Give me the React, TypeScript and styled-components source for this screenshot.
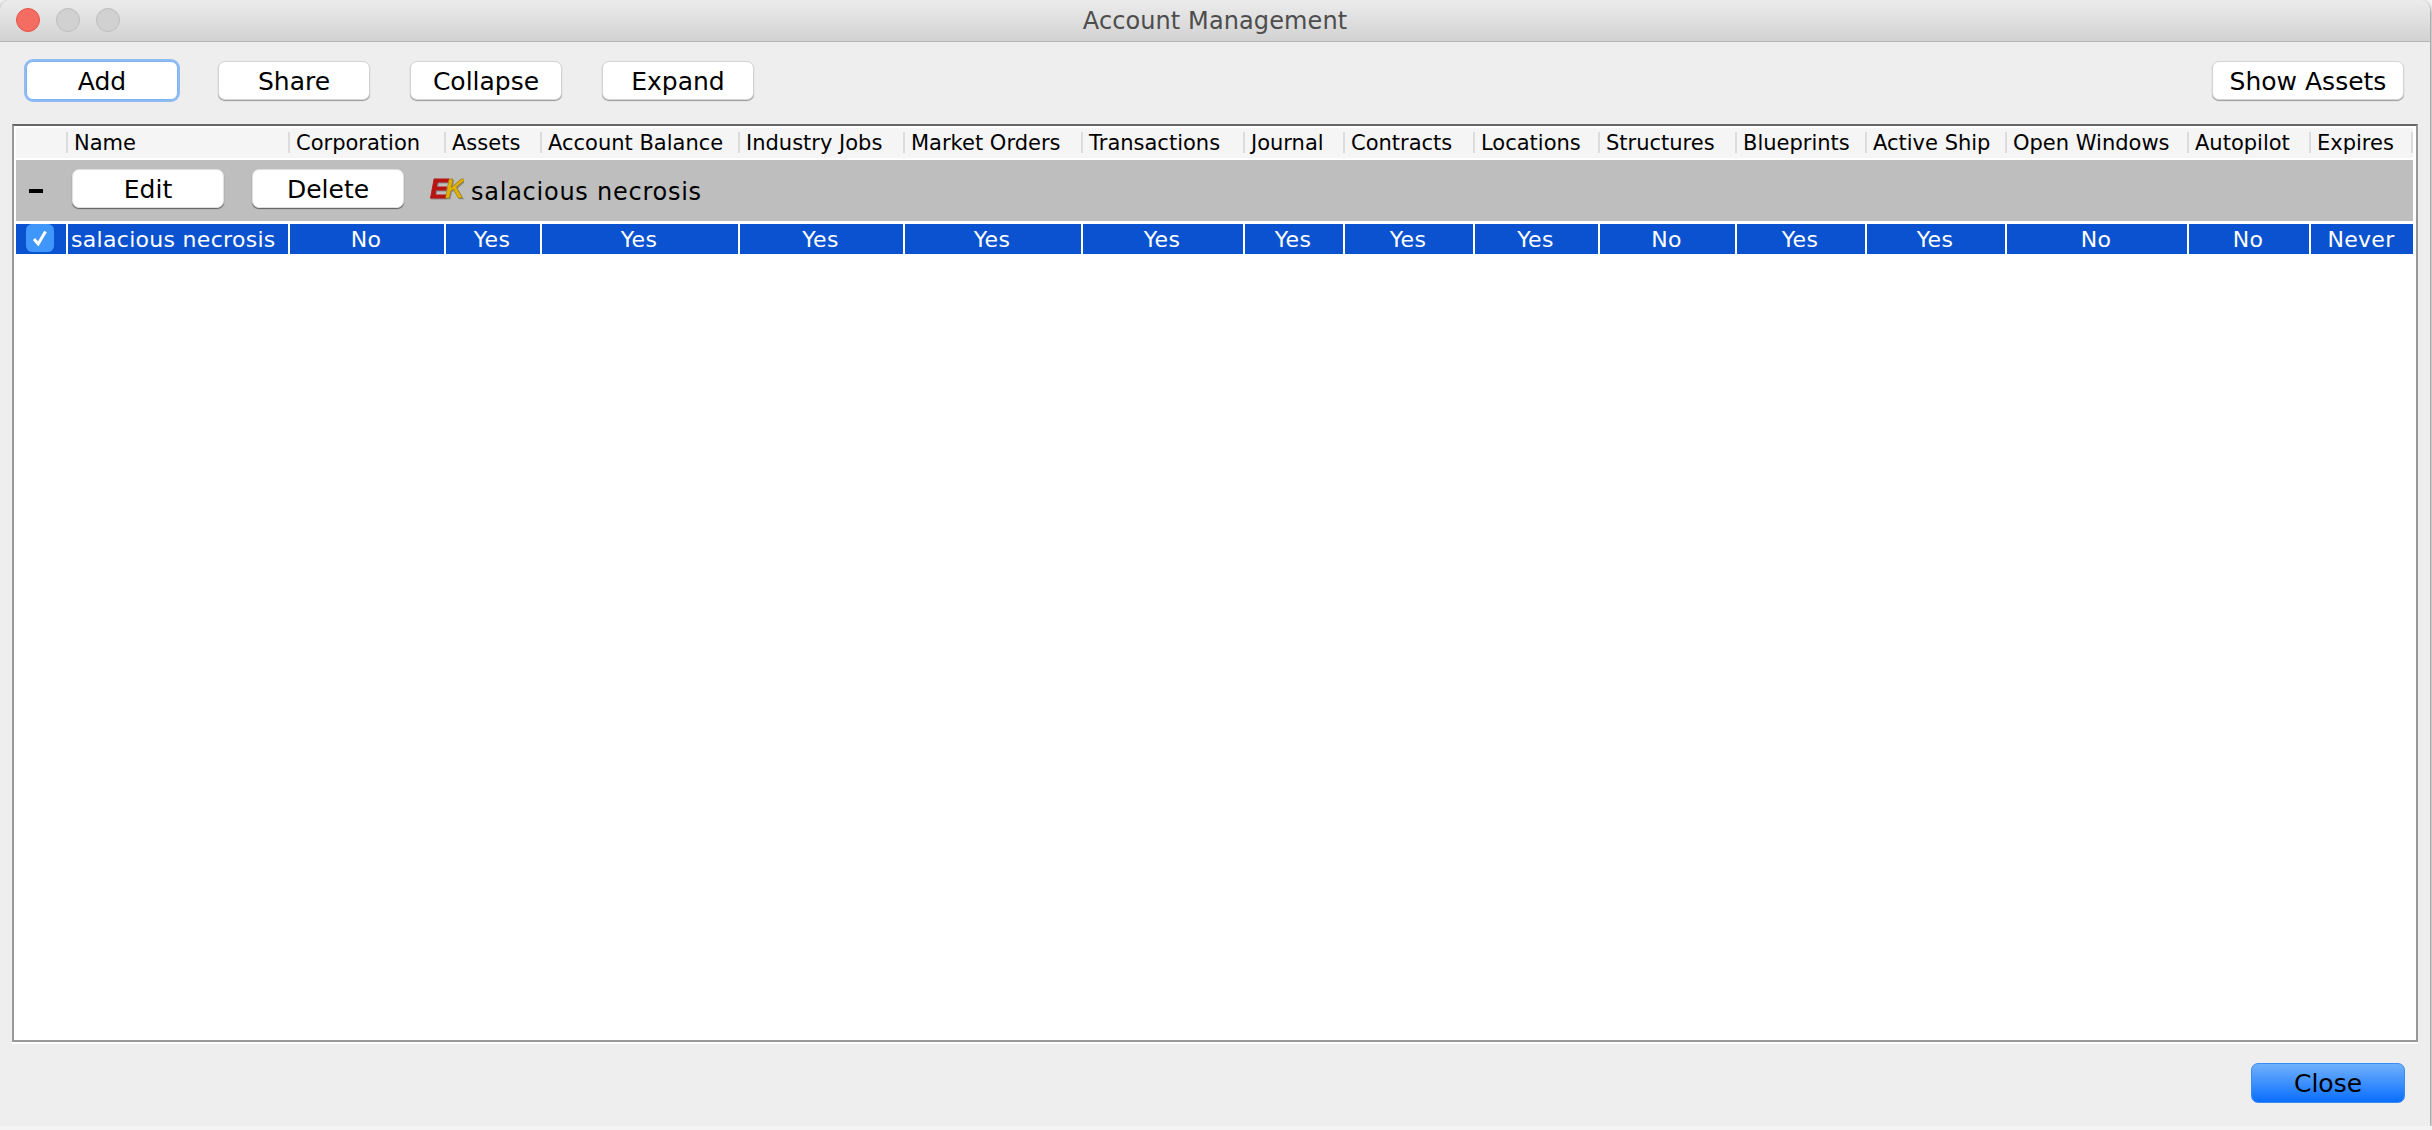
import React from 'react'
import styled, { createGlobalStyle } from 'styled-components'

const GlobalStyle = createGlobalStyle`
  html, body {
    margin: 0;
    padding: 0;
    background: #f4f4f4;
    overflow: hidden;
  }
`

const UI_FONT = `"DejaVu Sans", "Noto Sans", sans-serif`

const COLUMNS = [
  { title: '', width: 50 },
  { title: 'Name', width: 222, value: 'salacious necrosis' },
  { title: 'Corporation', width: 156, value: 'No' },
  { title: 'Assets', width: 96, value: 'Yes' },
  { title: 'Account Balance', width: 198, value: 'Yes' },
  { title: 'Industry Jobs', width: 165, value: 'Yes' },
  { title: 'Market Orders', width: 178, value: 'Yes' },
  { title: 'Transactions', width: 162, value: 'Yes' },
  { title: 'Journal', width: 100, value: 'Yes' },
  { title: 'Contracts', width: 130, value: 'Yes' },
  { title: 'Locations', width: 125, value: 'Yes' },
  { title: 'Structures', width: 137, value: 'No' },
  { title: 'Blueprints', width: 130, value: 'Yes' },
  { title: 'Active Ship', width: 140, value: 'Yes' },
  { title: 'Open Windows', width: 182, value: 'No' },
  { title: 'Autopilot', width: 122, value: 'No' },
  { title: 'Expires', width: 104, value: 'Never' },
]

const GRID_TEMPLATE = COLUMNS.map((c) => `${c.width}px`).join(' ')

const Window = styled.div`
  width: 2430px;
  height: 1126px;
  display: flex;
  flex-direction: column;
  background: #eeeeee;
  border-radius: 10px 10px 0 0;
  box-shadow: 0 2px 4px rgba(0, 0, 0, 0.7);
  font-family: ${UI_FONT};
  color: #000;
  overflow: hidden;
`

const TitleBar = styled.div`
  position: relative;
  flex: none;
  height: 41px;
  display: flex;
  align-items: center;
  justify-content: center;
  background: linear-gradient(#ececec, #d2d2d2);
  border-bottom: 1px solid #b4b4b4;
`

const TrafficLights = styled.div`
  position: absolute;
  left: 16px;
  top: 8px;
  display: flex;
  gap: 16px;
`

const Light = styled.span<{ $close?: boolean }>`
  width: 24px;
  height: 24px;
  box-sizing: border-box;
  border-radius: 50%;
  background: ${({ $close }) => ($close ? '#f56d62' : '#d1d1d1')};
  border: 1px solid ${({ $close }) => ($close ? '#e2564b' : '#bcbcbc')};
`

const Title = styled.div`
  font-size: 24px;
  color: #4d4d4d;
  letter-spacing: 0.1px;
`

const Toolbar = styled.div`
  flex: none;
  display: flex;
  justify-content: space-between;
  padding: 19px 26px 0 26px;
`

const ButtonGroup = styled.div`
  display: flex;
  gap: 40px;
`

const Button = styled.button<{ $focused?: boolean; $wide?: boolean }>`
  width: ${({ $wide }) => ($wide ? '192px' : '152px')};
  height: 39px;
  padding: 1px 0 0;
  box-sizing: border-box;
  background: #fff;
  border: 1px solid ${({ $focused }) => ($focused ? '#7fb4f2' : '#d4d4d4')};
  border-radius: 7px;
  box-shadow: ${({ $focused }) =>
    $focused ? '0 0 0 2px #8fbdf3' : '0 1px 1px rgba(0, 0, 0, 0.35)'};
  font-family: ${UI_FONT};
  font-size: 25px;
  color: #000;
`

const TableFrame = styled.div`
  flex: none;
  height: 918px;
  box-sizing: border-box;
  margin: 24px 12px 0;
  padding: 2px 3px 0 2px;
  background: #fff;
  border: 2px solid #999;
  border-top-color: #666;
  box-shadow: 0 2px 0 #fff;
`

const HeaderRow = styled.div`
  display: grid;
  grid-template-columns: ${GRID_TEMPLATE};
  height: 30px;
  background: #f5f5f5;
`

const HeaderCell = styled.div`
  font-size: 21px;
  line-height: 30px;
  white-space: nowrap;
  padding-left: 8px;
  position: relative;

  &:not(:first-child)::before {
    content: '';
    position: absolute;
    left: 0;
    top: 4px;
    bottom: 5px;
    width: 2px;
    background: #dcdcdc;
  }

  &:last-child::after {
    content: '';
    position: absolute;
    right: 0;
    top: 4px;
    bottom: 5px;
    width: 2px;
    background: #dcdcdc;
  }
`

const GroupRow = styled.div`
  display: flex;
  align-items: center;
  height: 61px;
  box-sizing: border-box;
  margin-top: 2px;
  padding: 0 0 4px 13px;
  background: #bebebe;
`

const CollapseMark = styled.span`
  width: 14px;
  height: 4px;
  margin: 5px 29px 0 0;
  background: #000;
`

const GroupButtons = styled(ButtonGroup)`
  gap: 28px;
`

const GroupButton = styled(Button)`
  border-color: #e0e0e0;
  box-shadow: 0 1px 1px rgba(0, 0, 0, 0.5);
`

const OwnerLogo = styled.svg`
  width: 34px;
  height: 34px;
  margin-left: 26px;
  margin-right: 7px;
`

const LogoText = styled.text`
  font-family: "Liberation Sans", sans-serif;
  font-weight: 700;
  font-style: italic;
  font-size: 27px;
  filter: drop-shadow(1px 1px 0 #8a8a8a);
`

const GroupName = styled.span`
  font-size: 24px;
  margin-top: 7px;
  letter-spacing: 0.75px;
`

const AccountRow = styled.div`
  display: grid;
  grid-template-columns: ${GRID_TEMPLATE};
  height: 30px;
  margin-top: 3px;
  background: #0a52d0;
`

const AccountCell = styled.div<{ $left?: boolean }>`
  box-sizing: border-box;
  display: flex;
  align-items: center;
  justify-content: ${({ $left }) => ($left ? 'flex-start' : 'center')};
  padding: ${({ $left }) => ($left ? '1px 0 0 3px' : '1px 2px 0 0')};
  border-left: 2px solid #fff;
  color: #fff;
  font-size: 22px;
  letter-spacing: 0.3px;
  white-space: nowrap;
`

const CheckCell = styled.div`
  display: flex;
  align-items: center;
  padding-left: 10px;
`

const CheckBox = styled.span`
  width: 28px;
  height: 28px;
  display: flex;
  align-items: center;
  justify-content: center;
  border-radius: 6px;
  background: #3f97fb;
  margin-bottom: 2px;
`

const Footer = styled.div`
  flex: 1;
  display: flex;
  justify-content: flex-end;
  align-items: flex-start;
  padding: 21px 25px 0 0;
`

const CloseButton = styled.button`
  width: 154px;
  height: 40px;
  padding: 1px 0 0;
  background: linear-gradient(#70b1fc, #0a6efe);
  border: 1px solid #3a8cf5;
  border-radius: 7px;
  font-family: ${UI_FONT};
  font-size: 25px;
  color: #000;
`

export default function App() {
  return (
    <>
      <GlobalStyle />
      <Window>
        <TitleBar>
          <TrafficLights>
            <Light $close />
            <Light />
            <Light />
          </TrafficLights>
          <Title>Account Management</Title>
        </TitleBar>
        <Toolbar>
          <ButtonGroup>
            <Button $focused>Add</Button>
            <Button>Share</Button>
            <Button>Collapse</Button>
            <Button>Expand</Button>
          </ButtonGroup>
          <Button $wide>Show Assets</Button>
        </Toolbar>
        <TableFrame>
          <HeaderRow>
            {COLUMNS.map((c) => (
              <HeaderCell key={c.title}>{c.title}</HeaderCell>
            ))}
          </HeaderRow>
          <GroupRow>
            <CollapseMark />
            <GroupButtons>
              <GroupButton>Edit</GroupButton>
              <GroupButton>Delete</GroupButton>
            </GroupButtons>
            <OwnerLogo viewBox="0 0 34 34">
              <LogoText x="0" y="26">
                <tspan fill="#b81414" stroke="#b81414" strokeWidth="0.8">E</tspan>
                <tspan dx="-3" fill="#e0b000" stroke="#8a6a00" strokeWidth="0.4">K</tspan>
              </LogoText>
            </OwnerLogo>
            <GroupName>salacious necrosis</GroupName>
          </GroupRow>
          <AccountRow>
            <CheckCell>
              <CheckBox>
                <svg width="20" height="20" viewBox="0 0 20 20">
                  <path d="M4 11 L8.2 16 L15.5 3.5" fill="none" stroke="#fff" strokeWidth="3" />
                </svg>
              </CheckBox>
            </CheckCell>
            {COLUMNS.slice(1).map((c, i) => (
              <AccountCell key={c.title} $left={i === 0}>
                {c.value}
              </AccountCell>
            ))}
          </AccountRow>
        </TableFrame>
        <Footer>
          <CloseButton>Close</CloseButton>
        </Footer>
      </Window>
    </>
  )
}
